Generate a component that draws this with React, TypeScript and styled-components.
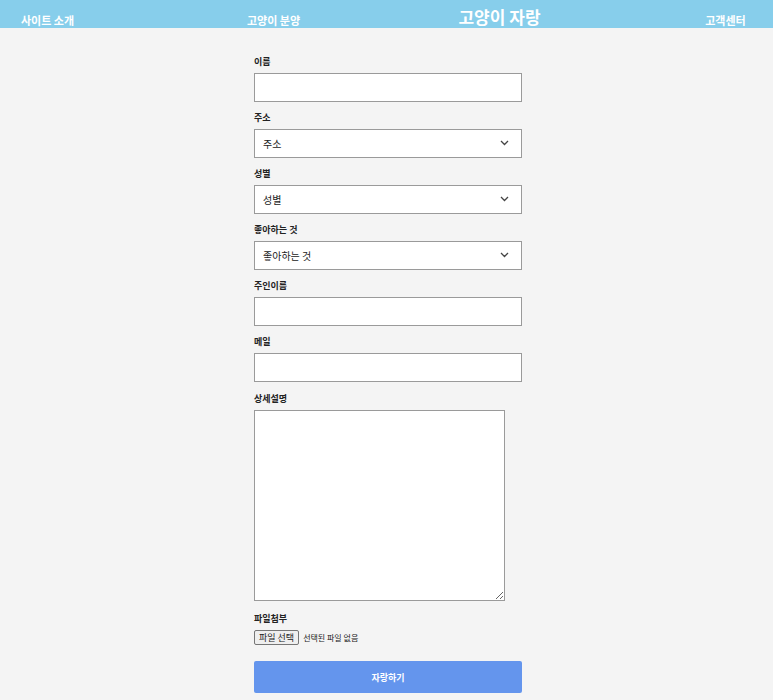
import React from "react";
import styled, { createGlobalStyle } from "styled-components";

const GlobalStyle = createGlobalStyle`
   html, body {
      margin: 0;
      padding: 0;
      background: #f4f4f4;
      font-family: "Noto Sans CJK KR", "Noto Sans", sans-serif;
   }
`;

const Header = styled.header`
   height: 28px;
   background: #87ceeb;
   display: flex;
   align-items: flex-end;
   gap: 131px;
`;

const NavItem = styled.a<{ $title?: boolean }>`
   width: 96px;
   text-align: center;
   color: #fff;
   font-weight: bold;
   text-decoration: none;
   font-size: ${({ $title }) => ($title ? "17px" : "11px")};
   line-height: ${({ $title }) => ($title ? "20px" : "14px")};
   margin-bottom: 1px;
`;

const FormWrap = styled.form`
   width: 268px;
   margin: 0 auto;
   padding: 27px 0 0 3px;
`;

const Field = styled.div<{ $gap?: number }>`
   margin-bottom: ${({ $gap }) => $gap ?? 9}px;
`;

const Label = styled.label`
   display: block;
   font-size: 9px;
   font-weight: bold;
   line-height: 14px;
   color: #222;
   margin-bottom: 4px;
`;

const TextInput = styled.input`
   display: block;
   box-sizing: border-box;
   width: 268px;
   height: 29px;
   border: 1px solid #9a9a9a;
   background: #fff;
   margin: 0;
`;

const SelectBox = styled.div`
   position: relative;
   width: 268px;
   height: 29px;
`;

const Select = styled.select`
   appearance: none;
   box-sizing: border-box;
   width: 100%;
   height: 100%;
   border: 1px solid #9a9a9a;
   border-radius: 0;
   background: #fff;
   padding: 0 8px;
   font-family: inherit;
   font-size: 10px;
   color: #222;
   margin: 0;
`;

const Chevron = styled.svg`
   position: absolute;
   right: 13px;
   top: 11px;
   pointer-events: none;
`;

const TextArea = styled.textarea`
   display: block;
   box-sizing: border-box;
   width: 251px;
   height: 191px;
   border: 1px solid #9a9a9a;
   background: #fff;
   margin: 0;
`;

const FileRow = styled.div`
   display: flex;
   align-items: center;
   gap: 4px;
   margin-bottom: 16px;
`;

const FileButton = styled.button`
   box-sizing: border-box;
   height: 15px;
   padding: 0 4px;
   border: 1px solid #767676;
   border-radius: 2px;
   background: #efefef;
   font-family: inherit;
   font-size: 9px;
   line-height: 12px;
   color: #222;
`;

const FileText = styled.span`
   font-size: 8px;
   color: #222;
`;

const Submit = styled.button`
   display: block;
   width: 268px;
   height: 32px;
   border: none;
   border-radius: 2px;
   background: #6495ed;
   color: #fff;
   font-family: inherit;
   font-weight: bold;
   font-size: 9px;
`;

interface FieldProps {
   label: string;
}

const SelectField: React.FC<FieldProps> = ({ label }) => (
   <Field>
      <Label>{label}</Label>
      <SelectBox>
         <Select defaultValue="">
            <option value="">{label}</option>
         </Select>
         <Chevron width="9" height="6" viewBox="0 0 9 6">
            <path d="M1 1 L4.5 4.5 L8 1" fill="none" stroke="#444" strokeWidth="1.3" />
         </Chevron>
      </SelectBox>
   </Field>
);

const InputField: React.FC<FieldProps & { gap?: number }> = ({ label, gap }) => (
   <Field $gap={gap}>
      <Label>{label}</Label>
      <TextInput type="text" />
   </Field>
);

const App: React.FC = () => {
   return (
      <>
         <GlobalStyle />
         <Header>
            <NavItem>사이트 소개</NavItem>
            <NavItem>고양이 분양</NavItem>
            <NavItem $title>고양이 자랑</NavItem>
            <NavItem>고객센터</NavItem>
         </Header>
         <FormWrap onSubmit={(e) => e.preventDefault()}>
            <InputField label="이름" />
            <SelectField label="주소" />
            <SelectField label="성별" />
            <SelectField label="좋아하는 것" />
            <InputField label="주인이름" />
            <InputField label="메일" gap={10} />
            <Field $gap={11}>
               <Label>상세설명</Label>
               <TextArea />
            </Field>
            <Label>파일첨부</Label>
            <FileRow>
               <FileButton type="button">파일 선택</FileButton>
               <FileText>선택된 파일 없음</FileText>
            </FileRow>
            <Submit type="submit">자랑하기</Submit>
         </FormWrap>
      </>
   );
};

export default App;
